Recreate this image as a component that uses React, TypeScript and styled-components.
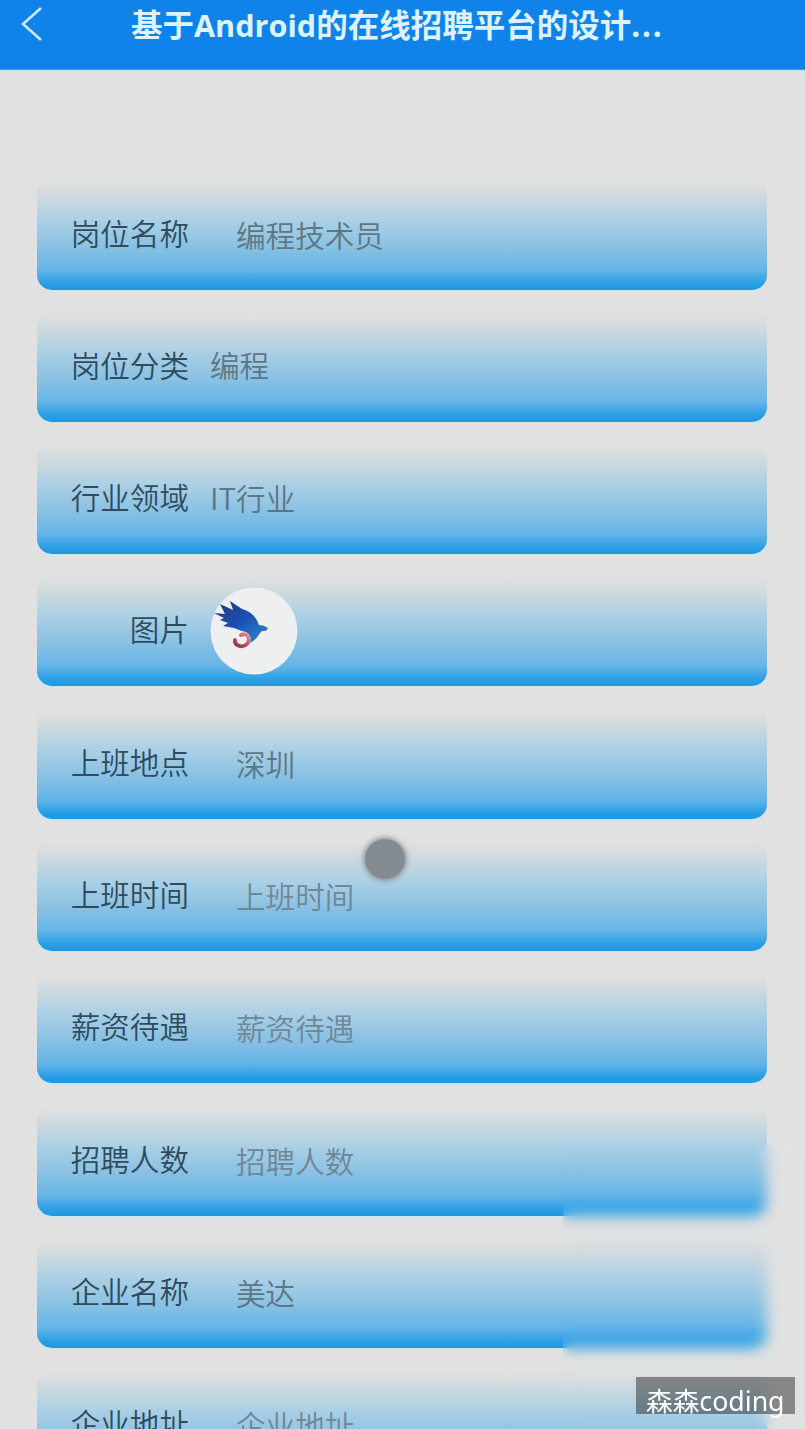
import React from 'react';
import styled, { createGlobalStyle } from 'styled-components';

const GlobalStyle = createGlobalStyle`
  * { box-sizing: border-box; }
  html, body { margin: 0; background: #e1e1e1; }
  body { font-family: "Noto Sans", "Noto Sans CJK SC", sans-serif; }
`;

const Screen = styled.div`
  position: relative;
  width: 100%;
  height: 1429px;
  overflow: hidden;
  background: #e1e1e1;
`;

const Header = styled.header`
  display: flex;
  align-items: flex-start;
  height: 70px;
  background: #1083ea;
  border-bottom: 1px solid #3f97dc;
  box-shadow: 0 1px 1px #c9e6ea;
`;

const BackIcon = styled.svg`
  flex: none;
  width: 66px;
  height: 50px;
`;

const Title = styled.h1`
  flex: 1;
  margin: 0 76px 0 0;
  padding-left: 65px;
  height: 50px;
  line-height: 50px;
  font-size: 31.5px;
  font-weight: 700;
  color: #dcf3fb;
  white-space: nowrap;
`;

const Latin = styled.span`
  font-family: "Open Sans", sans-serif;
  font-size: 30.6px;
`;

const Dots = styled.span`
  letter-spacing: 1.9px;
`;

const Form = styled.main`
  display: flex;
  flex-direction: column;
  gap: 20.3px;
  padding: 107.5px 38px 0 37px;
`;

const Row = styled.section`
  display: flex;
  align-items: center;
  flex: none;
  height: 112px;
  border-radius: 15px;
  background: linear-gradient(
    to bottom,
    #e1e1e1 0%,
    #dfe0e0 5%,
    #c9d8df 20%,
    #a9cfe5 39%,
    #8bc2e3 60%,
    #65b5e8 82%,
    #2a9fe6 94%,
    #1f97de 100%
  );
  box-shadow: 0 2px 1px -1px #c5e7ee;
`;

const Label = styled.label`
  flex: none;
  width: 152px;
  text-align: right;
  font-size: 29.6px;
  font-weight: 350;
  line-height: 40px;
  color: #2f4c5e;
`;

const Value = styled.span<{ $kind: 'input' | 'select' | 'hint' }>`
  margin-left: ${({ $kind }) => ($kind === 'select' ? 21 : 47)}px;
  padding-bottom: ${({ $kind }) => ($kind === 'select' ? 1 : 0)}px;
  padding-top: ${({ $kind }) => ($kind === 'select' ? 0 : 2)}px;
  font-family: "Noto Sans CJK SC", sans-serif;
  font-size: 29.6px;
  font-weight: 350;
  line-height: 40px;
  color: ${({ $kind }) => ($kind === 'hint' ? '#6f8797' : '#5f7685')};
`;

const Avatar = styled.svg`
  width: 88px;
  height: 88px;
  margin: 2px 0 0 21px;
`;

const TouchDot = styled.div`
  position: absolute;
  left: 365px;
  top: 839px;
  width: 40px;
  height: 40px;
  border-radius: 50%;
  background: #858c91;
  box-shadow: 0 0 5px 2px rgba(125, 132, 137, 0.75);
`;

const Frosted = styled.div`
  position: absolute;
  left: 563px;
  top: 1143px;
  right: 0;
  bottom: 0;
  backdrop-filter: blur(7px);
`;

const Watermark = styled.div`
  position: absolute;
  left: 636px;
  top: 1377px;
  width: 159px;
  height: 37px;
  padding-left: 10px;
  line-height: 47px;
  font-size: 26.7px;
  font-weight: 400;
  color: #fff;
  white-space: nowrap;
  background: rgba(0, 0, 0, 0.4);
`;

type Field = { label: string; value?: string; kind: 'input' | 'select' | 'hint' | 'image' };

const fields: Field[] = [
  { label: '岗位名称', value: '编程技术员', kind: 'input' },
  { label: '岗位分类', value: '编程', kind: 'select' },
  { label: '行业领域', value: 'IT行业', kind: 'select' },
  { label: '图片', kind: 'image' },
  { label: '上班地点', value: '深圳', kind: 'input' },
  { label: '上班时间', value: '上班时间', kind: 'hint' },
  { label: '薪资待遇', value: '薪资待遇', kind: 'hint' },
  { label: '招聘人数', value: '招聘人数', kind: 'hint' },
  { label: '企业名称', value: '美达', kind: 'input' },
  { label: '企业地址', value: '企业地址', kind: 'hint' },
];

function BirdLogo() {
  return (
    <Avatar viewBox="0 0 88 88">
      <defs>
        <linearGradient id="wing" x1="0" y1="0" x2="1" y2="1">
          <stop offset="0" stopColor="#20377f" />
          <stop offset="0.5" stopColor="#1b51b3" />
          <stop offset="1" stopColor="#318cc9" />
        </linearGradient>
        <linearGradient id="tail" x1="0" y1="1" x2="1" y2="0">
          <stop offset="0" stopColor="#8d2f5b" />
          <stop offset="0.5" stopColor="#c84b5d" />
          <stop offset="1" stopColor="#d898aa" />
        </linearGradient>
      </defs>
      <circle cx="44" cy="44" r="43.5" fill="#eeeff1" />
      <path
        d="M4 26 L15 27 L10 17 L23 23 L20 14 L32 22 C40 24 46 29 49 38 Q54 38 58 41 L56 44 Q52 43 50 46 C47 51 44 54 40 56 Q42 48 36 45 Q31 44 24 41 L13 39 L18 36 L10 33 L14 31 Z"
        fill="url(#wing)"
      />
      <path
        d="M31 48 C38 45 41 52 37 57 C32 62 24 58 25 53"
        fill="none"
        stroke="url(#tail)"
        strokeWidth="3.8"
        strokeLinecap="round"
      />
    </Avatar>
  );
}

export default function App() {
  return (
    <Screen>
      <GlobalStyle />
      <Header>
        <BackIcon viewBox="0 0 66 50" fill="none" stroke="#c9eafa" strokeWidth="2.6">
          <path d="M41 8 L23 24 L41 40" />
        </BackIcon>
        <Title>
          基于<Latin>Android</Latin>的在线招聘平台的设计<Dots>...</Dots>
        </Title>
      </Header>
      <Form>
        {fields.map(({ label, value, kind }) => (
          <Row key={label}>
            <Label>{label}</Label>
            {kind === 'image' ? <BirdLogo /> : <Value $kind={kind}>{value}</Value>}
          </Row>
        ))}
      </Form>
      <TouchDot />
      <Frosted />
      <Watermark>森森coding</Watermark>
    </Screen>
  );
}
